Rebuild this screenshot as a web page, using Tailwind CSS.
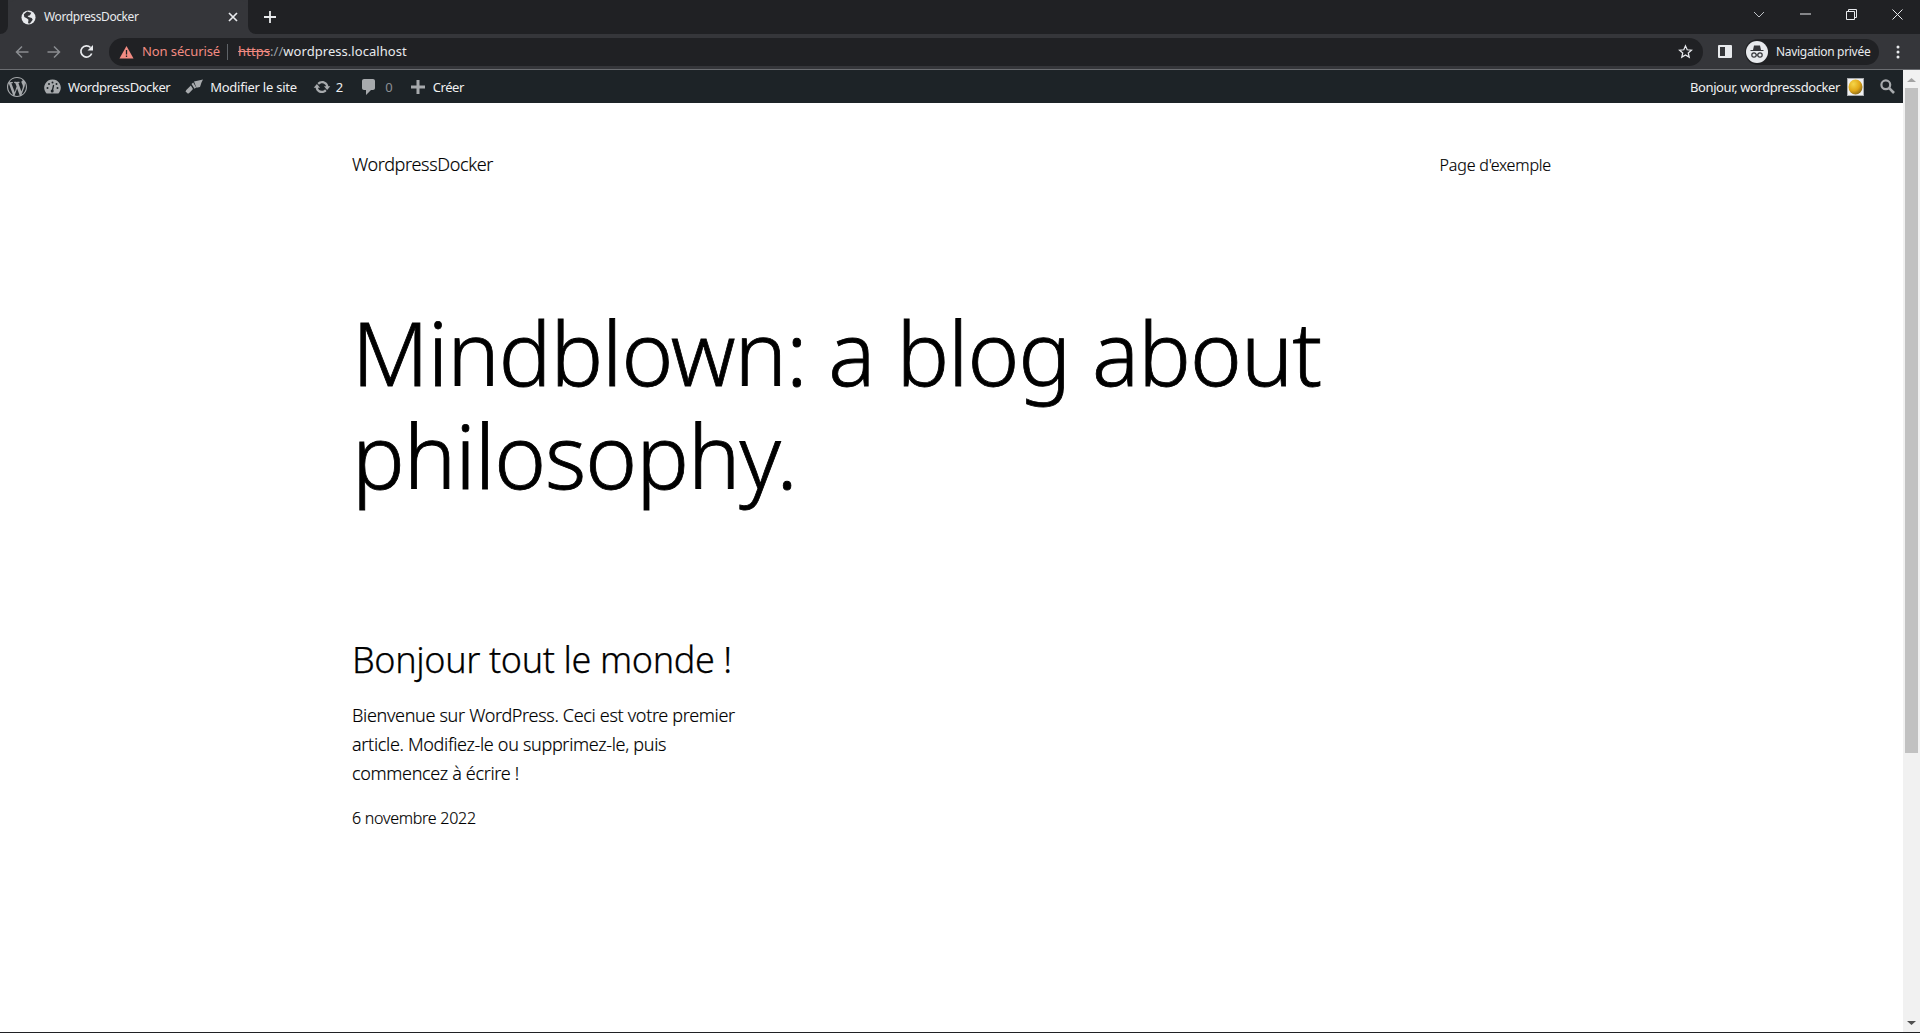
<!doctype html>
<html lang="fr"><head><meta charset="utf-8"><title>WordpressDocker</title>
<script src="https://cdn.jsdelivr.net/npm/@tailwindcss/browser@4"></script></head>
<body class="h-[1033px] overflow-hidden bg-white font-['Noto_Sans',sans-serif]">
<div class="flex h-[1033px] flex-col">
  <!-- tab strip -->
  <div class="flex h-[34px] shrink-0 bg-[#35363a]">
    <div class="h-full w-2 rounded-br-lg bg-[#202124]"></div>
    <div class="flex h-full w-[240px] items-center rounded-t-lg bg-[#35363a] pl-[13px] pr-[9px] text-[12px] text-[#e8eaed]">
      <svg class="h-[15px] w-[15px] shrink-0" viewBox="0 0 16 16"><circle cx="8" cy="8" r="7.500" fill="#e8eaed"/><path d="M6.500 1.500 3 4.500l.5 3 3 1.500 1.500 1.500-.5 3.500 2 .5 3-4-1-2-3.500-1-1-1 2.500-1 1.500-2.500z" fill="#35363a"/></svg>
      <span class="ml-[8px] flex-1 tracking-[-0.4px]">WordpressDocker</span>
      <svg class="h-[12px] w-[12px]" viewBox="0 0 12 12"><path d="M2 2l8 8M10 2l-8 8" stroke="#e8eaed" stroke-width="1.700"/></svg>
    </div>
    <div class="flex h-full flex-1 rounded-bl-lg bg-[#202124] text-[#e8eaed]">
      <div class="ml-[16px] flex h-full items-center">
        <svg class="h-[12px] w-[12px]" viewBox="0 0 12 12"><path d="M6 0v12M0 6h12" stroke="#e8eaed" stroke-width="1.800"/></svg>
      </div>
      <div class="flex-1"></div>
      <div class="flex h-[28px] items-center">
        <svg class="mr-[35px] h-[7px] w-[12px]" viewBox="0 0 12 7"><path d="M1 1l5 5 5-5" fill="none" stroke="#bdc1c6"/></svg>
        <svg class="mr-[35px] h-[2px] w-[11px]" viewBox="0 0 11 2"><path d="M0 1h11" stroke="#e8eaed" stroke-width="1"/></svg>
        <svg class="mr-[35px] h-[11px] w-[11px]" viewBox="0 0 11 11"><path d="M.5 2.500h8v8h-8zM2.500 2.500v-2h8v8h-2" fill="none" stroke="#e8eaed"/></svg>
        <svg class="mr-[17px] h-[11px] w-[11px]" viewBox="0 0 11 11"><path d="M.5.5l10 10M10.500.5l-10 10" stroke="#e8eaed"/></svg>
      </div>
    </div>
  </div>
  <!-- toolbar -->
  <div class="flex h-[36px] shrink-0 items-center border-b border-[#6b6d71] bg-[#35363a]">
    <svg class="ml-[15px] h-[14px] w-[14px]" viewBox="0 0 14 14"><path d="M13.500 7H1.500M7 1.500 1.500 7 7 12.500" fill="none" stroke="#8a8c90" stroke-width="1.500"/></svg>
    <svg class="ml-[18px] h-[14px] w-[14px]" viewBox="0 0 14 14"><path d="M.5 7h12M7 1.500 12.500 7 7 12.500" fill="none" stroke="#8a8c90" stroke-width="1.500"/></svg>
    <svg class="ml-[18px] h-[15px] w-[15px]" viewBox="0 0 15 15"><path d="M12.700 9.500A5.600 5.600 0 1 1 11.500 3.500" fill="none" stroke="#e8eaed" stroke-width="1.700"/><path d="M14 1v5.500H8.500z" fill="#e8eaed"/></svg>
    <div class="ml-[15px] flex h-[28px] w-[1594px] items-center rounded-full bg-[#202124] pl-[10px] text-[13px]">
      <svg class="h-[14px] w-[15px] shrink-0" viewBox="0 0 15 14"><path d="M7.500 1 14.500 13.500H.5z" fill="#f28b82"/><path d="M7.500 5v4.500M7.500 10.500v1.500" stroke="#202124" stroke-width="1.300"/></svg>
      <span class="ml-[8px] pt-px text-[#f28b82] tracking-[-0.1px]">Non sécurisé</span>
      <span class="ml-[7px] mr-[10px] h-[16px] w-px bg-[#5f6368]"></span>
      <span class="pt-px text-[#f28b82] line-through tracking-[0.05px]">https</span><span class="pt-px text-[#9aa0a6] tracking-[0.05px]">://</span><span class="pt-px text-[#e8eaed] tracking-[0.05px]">wordpress.localhost</span>
      <span class="flex-1"></span>
      <svg class="mr-[10px] h-[15px] w-[15px]" viewBox="0 0 24 24"><path d="M12 3l2.700 6.200 6.800.6-5.100 4.500 1.500 6.700L12 17.500 6.100 21l1.500-6.700L2.500 9.800l6.800-.6z" fill="none" stroke="#e8eaed" stroke-width="2"/></svg>
    </div>
    <div class="ml-[15px] flex h-[13px] w-[14px] rounded-[1px] border-2 border-[#e8eaed]"><div class="ml-auto h-full w-[5px] bg-[#e8eaed]"></div></div>
    <div class="ml-[13px] flex h-[26px] w-[134px] items-center rounded-full bg-[#202124] pl-[1px] text-[12px] text-[#e8eaed]">
      <span class="flex h-[22px] w-[22px] items-center justify-center rounded-full bg-[#e8eaed]">
        <svg class="h-[16px] w-[16px]" viewBox="0 0 16 16"><path d="M5 1.500h6l1 4.500h2.500v1h-13V6H4z" fill="#35363a"/><circle cx="5" cy="11" r="2.200" fill="none" stroke="#35363a" stroke-width="1.200"/><circle cx="11" cy="11" r="2.200" fill="none" stroke="#35363a" stroke-width="1.200"/><path d="M7 11h2" stroke="#35363a"/></svg>
      </span>
      <span class="ml-[8px] tracking-[-0.3px]">Navigation privée</span>
    </div>
    <svg class="ml-[17px] h-[14px] w-[4px]" viewBox="0 0 4 14"><circle cx="2" cy="2" r="1.500" fill="#e8eaed"/><circle cx="2" cy="7" r="1.500" fill="#e8eaed"/><circle cx="2" cy="12" r="1.500" fill="#e8eaed"/></svg>
  </div>
  <div class="flex min-h-0 flex-1">
    <div class="min-w-0 flex-1">
      <!-- admin bar -->
      <div class="flex h-[33px] items-center bg-[#1d2327] text-[13px] text-[#f0f0f1]">
        <svg class="ml-[7px] h-[20px] w-[20px]" viewBox="0 0 20 20"><path fill="#a7aaad" d="M20 10c0-5.510-4.490-10-10-10C4.480 0 0 4.490 0 10c0 5.520 4.480 10 10 10 5.510 0 10-4.480 10-10zM7.780 15.370L4.370 6.220c.550-.020 1.170-.080 1.170-.080.500-.060.440-1.130-.060-1.110 0 0-1.450.110-2.370.110-.180 0-.370 0-.580-.010C4.120 2.690 6.870 1.110 10 1.110c2.330 0 4.450.870 6.050 2.340-.680-.110-1.650.390-1.650 1.580 0 .740.450 1.360.900 2.100.350.610.550 1.360.550 2.460 0 1.490-1.400 5-1.400 5l-3.030-8.370c.540-.020.820-.170.820-.170.500-.050.440-1.250-.060-1.220 0 0-1.440.120-2.380.120-.870 0-2.330-.120-2.330-.120-.500-.030-.560 1.200-.060 1.220l.920.080 1.260 3.410zM17.410 10c.240-.640.740-1.870.430-4.250.700 1.290 1.050 2.710 1.050 4.250 0 3.290-1.730 6.240-4.400 7.780.970-2.590 1.940-5.200 2.920-7.780zM6.100 18.090C3.120 16.650 1.110 13.530 1.110 10c0-1.300.230-2.480.720-3.590C3.250 10.300 4.670 14.200 6.100 18.090zm4.030-6.630l2.580 6.980c-.860.290-1.740.450-2.710.450-.820 0-1.610-.110-2.360-.340 0 0 2.490-7.090 2.490-7.090z"/></svg>
        <svg class="ml-[17px] h-[15px] w-[17px]" viewBox="0 0 17 15"><path d="M8.500 .5a8.200 8.200 0 0 0-6.900 12.700l1 1.300h11.800l1-1.300A8.200 8.200 0 0 0 8.500 .5z" fill="#a7aaad"/><path d="M8.300 12 9.600 6" stroke="#1d2327" stroke-width="1.300"/><circle cx="8.200" cy="12" r="1.500" fill="#1d2327"/><circle cx="3.500" cy="9" r="1" fill="#1d2327"/><circle cx="5" cy="5" r="1" fill="#1d2327"/><circle cx="8.500" cy="3.500" r="1" fill="#1d2327"/><circle cx="12.500" cy="5" r="1" fill="#1d2327"/><circle cx="13.500" cy="9" r="1" fill="#1d2327"/></svg>
        <span class="ml-[7px] pt-[2px] tracking-[-0.45px]">WordpressDocker</span>
        <svg class="ml-[15px] h-[15px] w-[18px]" viewBox="0 0 18 15"><path d="M9 2.500 18 .5l-1.500 3L15 8 11.500 8.800zM8.200 3.500l3 5-1.700 1.200-3-4.700zM5.800 6.500 8 10l-3.500 3.800-1.500 1L.5 12.500l.8-1.500z" fill="#a7aaad"/></svg>
        <span class="ml-[7px] pt-[2px] tracking-[-0.25px]">Modifier le site</span>
        <svg class="ml-[16px] h-[18px] w-[18px]" viewBox="0 0 20 20"><path fill="#a7aaad" d="M10.200 3.280c3.530 0 6.430 2.610 6.920 6h2.080l-3.500 4-3.500-4h2.320c-.450-1.970-2.210-3.440-4.320-3.440-1.450 0-2.730.710-3.540 1.790L4.950 5.660C6.230 4.200 8.110 3.280 10.200 3.280zm-.400 13.440c-3.520 0-6.430-2.610-6.920-6H.800l3.500-4c1.170 1.330 2.330 2.670 3.500 4H5.480c.450 1.970 2.210 3.440 4.320 3.440 1.450 0 2.730-.710 3.540-1.790l1.710 1.950c-1.280 1.460-3.150 2.400-5.250 2.400z"/></svg>
        <span class="ml-[5px] pt-[2px]">2</span>
        <svg class="ml-[16px] h-[20px] w-[20px]" viewBox="0 0 20 20"><path fill="#a7aaad" d="M5 2h9c1.100 0 2 .900 2 2v7c0 1.100-.900 2-2 2h-2l-5 5v-5H5c-1.100 0-2-.900-2-2V4c0-1.100.900-2 2-2z"/></svg>
        <span class="ml-[6px] pt-[2px] text-[#8c8f94]">0</span>
        <svg class="ml-[18px] h-[14px] w-[14px]" viewBox="0 0 14 14"><path d="M7 0v14M0 7h14" stroke="#a7aaad" stroke-width="3"/></svg>
        <span class="ml-[8px] pt-[2px] tracking-[-0.4px]">Créer</span>
        <span class="flex-1"></span>
        <span class="pt-[2px] tracking-[-0.4px]">Bonjour, wordpressdocker</span>
        <svg class="ml-[7px] h-[18px] w-[17px]" viewBox="0 0 17 18"><defs><radialGradient id="coin" cx="35%" cy="30%" r="75%"><stop offset="0" stop-color="#f5d64a"/><stop offset=".6" stop-color="#e2a817"/><stop offset="1" stop-color="#8a6a1c"/></radialGradient></defs><rect x=".5" y=".5" width="16" height="17" fill="#f0f0f1" stroke="#a7aaad"/><ellipse cx="8.500" cy="9" rx="7" ry="7.500" fill="url(#coin)"/></svg>
        <svg class="ml-[16px] mr-[8px] h-[15px] w-[15px]" viewBox="0 0 15 15"><circle cx="5.800" cy="5.800" r="4.400" fill="none" stroke="#a7aaad" stroke-width="2.200"/><path d="M9.200 9.200 14 14" stroke="#a7aaad" stroke-width="2.600"/></svg>
      </div>
      <!-- page -->
      <main class="px-[352px] text-black">
        <header class="flex items-center justify-between pt-[48px]">
          <span class="text-[18px] font-light tracking-[-0.34px] [-webkit-text-stroke:0.15px_black]">WordpressDocker</span>
          <span class="text-[16px] font-light tracking-[-0.18px] [-webkit-text-stroke:0.15px_black]">Page d'exemple</span>
        </header>
        <h1 class="mt-[123px] w-[1100px] text-[88px] leading-[103px] font-light tracking-[-1px] [-webkit-text-stroke:0.8px_black]">Mindblown: a blog about philosophy.</h1>
        <h2 class="mt-[128px] text-[36px] leading-[50px] font-light tracking-[-0.39px] [-webkit-text-stroke:0.25px_black]">Bonjour tout le monde !</h2>
        <p class="mt-[16px] w-[400px] text-[18px] leading-[28.800px] font-light tracking-[-0.32px] [-webkit-text-stroke:0.15px_black]">Bienvenue sur WordPress. Ceci est votre premier article. Modifiez-le ou supprimez-le, puis commencez à écrire !</p>
        <p class="mt-[19px] text-[16px] font-light tracking-[-0.26px] [-webkit-text-stroke:0.15px_black]">6 novembre 2022</p>
      </main>
    </div>
    <div class="flex w-[17px] shrink-0 flex-col items-center bg-[#f1f1f1]">
      <svg class="mt-[8px] h-[4px] w-[9px]" viewBox="0 0 9 4"><path d="M4.500 0 9 4H0z" fill="#a3a3a3"/></svg>
      <div class="mt-[6px] h-[665px] w-[13px] bg-[#c1c1c1]"></div>
      <div class="flex-1"></div>
      <svg class="mb-[7px] h-[4px] w-[9px]" viewBox="0 0 9 4"><path d="M0 0h9L4.500 4z" fill="#505050"/></svg>
    </div>
  </div>
  <div class="h-px shrink-0 bg-[#202124]"></div>
</div>
</body></html>
